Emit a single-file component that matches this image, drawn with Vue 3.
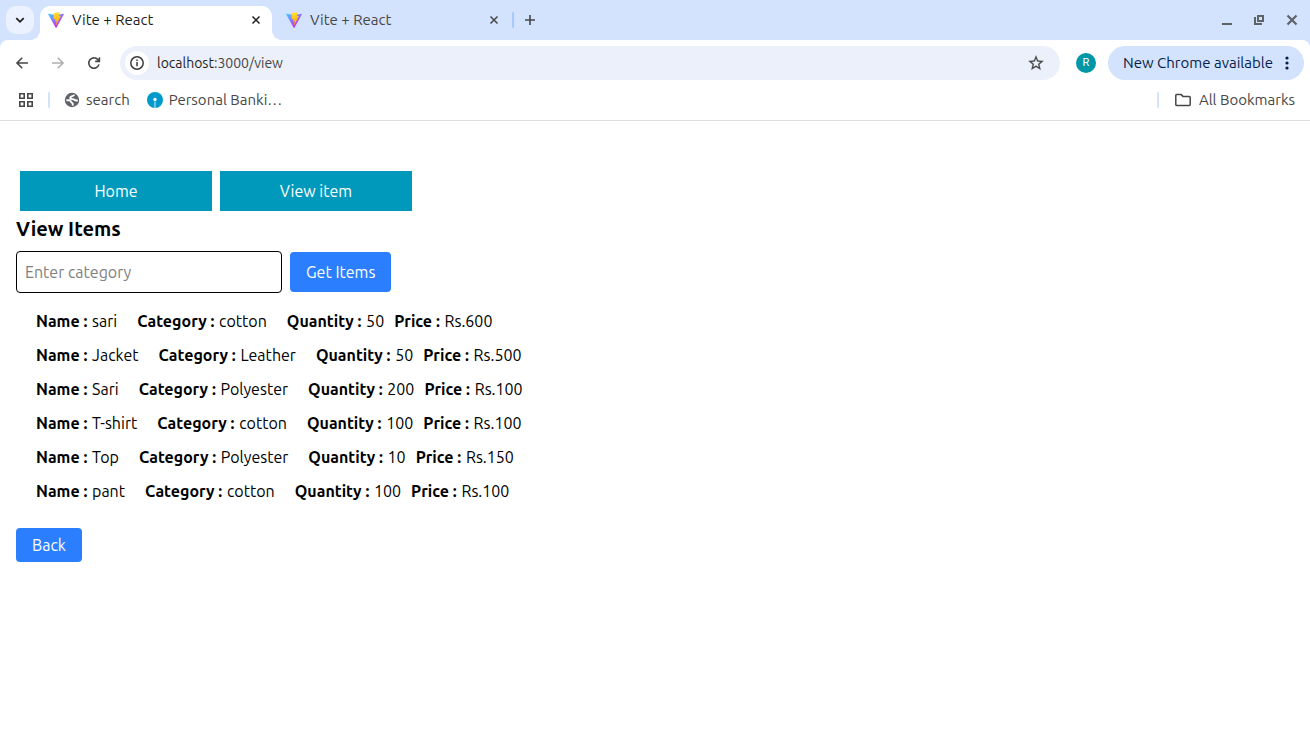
<script setup>
import { ref } from 'vue'

const category = ref('')
const tabs = [
  { title: 'Vite + React', active: true },
  { title: 'Vite + React', active: false },
]
const items = [
  { name: 'sari', category: 'cotton', quantity: 50, price: 600 },
  { name: 'Jacket', category: 'Leather', quantity: 50, price: 500 },
  { name: 'Sari', category: 'Polyester', quantity: 200, price: 100 },
  { name: 'T-shirt', category: 'cotton', quantity: 100, price: 100 },
  { name: 'Top', category: 'Polyester', quantity: 10, price: 150 },
  { name: 'pant', category: 'cotton', quantity: 100, price: 100 },
]
</script>

<template>
  <div class="browser">
    <header class="chrome">
      <div class="tabstrip">
        <button class="tab-search" aria-label="Search tabs">
          <svg width="16" height="16" viewBox="0 0 16 16" fill="none" stroke="#1f1f1f" stroke-width="1.8"><path d="M4.3 6.2 8 9.8l3.7-3.6" /></svg>
        </button>
        <div class="tabs">
          <div v-for="(tab, i) in tabs" :key="i" class="tab" :class="{ active: tab.active }">
            <svg width="16" height="16" viewBox="0 0 256 257" aria-hidden="true">
              <defs>
                <linearGradient :id="'cone' + i" x1="0" x2="0.6" y1="0" y2="0.8"><stop offset="0" stop-color="#41d1ff" /><stop offset="1" stop-color="#bd34fe" /></linearGradient>
                <linearGradient :id="'bolt' + i" x1="0.4" x2="0.5" y1="0" y2="0.9"><stop offset="0" stop-color="#ffea83" /><stop offset="0.1" stop-color="#ffdd35" /><stop offset="1" stop-color="#ffa800" /></linearGradient>
              </defs>
              <path :fill="`url(#cone${i})`" d="M255.153 37.938 134.897 252.976c-2.483 4.44-8.862 4.466-11.382.048L.875 37.958c-2.746-4.814 1.371-10.646 6.827-9.67l120.385 21.517a6.537 6.537 0 0 0 2.322-.004l117.867-21.483c5.438-.991 9.574 4.796 6.877 9.62Z" />
              <path :fill="`url(#bolt${i})`" d="M185.432.063 96.44 17.501a3.268 3.268 0 0 0-2.634 3.014l-5.474 92.456a3.268 3.268 0 0 0 3.997 3.378l24.777-5.718c2.318-.535 4.413 1.507 3.936 3.838l-7.361 36.047c-.495 2.426 1.782 4.5 4.151 3.78l15.304-4.649c2.372-.72 4.652 1.36 4.15 3.788l-11.698 56.621c-.732 3.542 3.979 5.473 5.943 2.437l1.313-2.028 72.516-144.72c1.215-2.423-.88-5.186-3.54-4.672l-25.505 4.922c-2.396.462-4.435-1.77-3.759-4.114l16.646-57.705c.677-2.35-1.37-4.583-3.769-4.113Z" />
            </svg>
            <span class="tab-title">{{ tab.title }}</span>
            <button class="tab-close" aria-label="Close tab">
              <svg width="16" height="16" viewBox="0 0 16 16" fill="none" stroke="currentColor" stroke-width="1.5"><path d="m4.5 4.5 7 7m0-7-7 7" /></svg>
            </button>
          </div>
          <span class="divider strip-divider"></span>
          <button class="new-tab" aria-label="New tab">
            <svg width="16" height="16" viewBox="0 0 16 16" fill="none" stroke="#474747" stroke-width="1.6"><path d="M8 3v10M3 8h10" /></svg>
          </button>
        </div>
        <div class="window-controls">
          <button aria-label="Minimize"><svg width="16" height="16" viewBox="0 0 16 16" stroke="#5f6368" stroke-width="2"><path d="M4 12h10" /></svg></button>
          <button aria-label="Restore"><svg width="16" height="16" viewBox="0 0 16 16" fill="none" stroke="#5f6368" stroke-width="2"><path d="M7 4h5v5H7zM4 5v7h7" /></svg></button>
          <button aria-label="Close window"><svg width="16" height="16" viewBox="0 0 16 16" stroke="#5f6368" stroke-width="2.2"><path d="m3.5 3.5 9 9m0-9-9 9" /></svg></button>
        </div>
      </div>

      <div class="toolbar">
        <div class="nav-buttons">
          <button aria-label="Back"><svg width="16" height="16" viewBox="0 0 16 16" fill="none" stroke="#474747" stroke-width="1.6"><path d="M14 8H3.5M8.2 2.8 3 8l5.2 5.2" /></svg></button>
          <button aria-label="Forward" disabled><svg width="16" height="16" viewBox="0 0 16 16" fill="none" stroke="#b0b0b0" stroke-width="1.6"><path d="M2 8h10.5M7.8 2.8 13 8l-5.2 5.2" /></svg></button>
          <button aria-label="Reload"><svg width="16" height="16" viewBox="0 0 16 16" fill="none" stroke="#474747" stroke-width="1.6"><path d="M13 9.4A5.2 5.2 0 1 1 11.9 4.6L13.2 6M13.4 2.2v4.2H9.2" /></svg></button>
        </div>
        <div class="omnibox">
          <button class="site-info" aria-label="View site information">
            <svg width="16" height="16" viewBox="0 0 16 16" fill="none" stroke="#3c3c3c" stroke-width="1.5"><circle cx="8" cy="8" r="6.2" /><path d="M8 7v4.2M8 4.6v1.5" /></svg>
          </button>
          <a class="url" href="#"><span class="host">localhost</span>:3000/view</a>
          <button class="star" aria-label="Bookmark this tab">
            <svg width="18" height="18" viewBox="0 0 24 24" fill="#474747" stroke="#474747" stroke-width="0.3"><path d="m22 9.24-7.19-.62L12 2 9.19 8.63 2 9.24l5.46 4.73L5.82 21 12 17.27 18.18 21l-1.63-7.03L22 9.24zM12 15.4l-3.76 2.27 1-4.28-3.32-2.88 4.38-.38L12 6.1l1.71 4.04 4.38.38-3.32 2.88 1 4.28L12 15.4z" /></svg>
          </button>
        </div>
        <button class="avatar" aria-label="Profile R">R</button>
        <button class="update">
          New Chrome available
          <svg width="4" height="16" viewBox="0 0 4 16" fill="#041e49"><circle cx="2" cy="3" r="1.6" /><circle cx="2" cy="8" r="1.6" /><circle cx="2" cy="13" r="1.6" /></svg>
        </button>
      </div>

      <nav class="bookmarks" aria-label="Bookmarks">
        <button class="apps" aria-label="Apps">
          <svg width="16" height="16" viewBox="0 0 16 16" fill="none" stroke="#474747" stroke-width="1.6"><path d="M1.8 1.8h4.4v4.4H1.8zM9.8 1.8h4.4v4.4H9.8zM1.8 9.8h4.4v4.4H1.8zM9.8 9.8h4.4v4.4H9.8z" /></svg>
        </button>
        <span class="divider"></span>
        <a class="bookmark search" href="#">
          <svg width="16" height="16" viewBox="0 0 16 16" fill="none"><circle cx="8" cy="8" r="7.2" fill="#5f6368" /><path stroke="#fff" stroke-width="1.9" d="M10.2 2.6C9.8 4.6 6.4 3.6 6.2 5.8c-.1 1.8 2.8 1 4.2 2 1.2.9 2.2.8 3.4.5M2.4 8.2h2.8c2 0 1.4 2.2 2.9 2.6 1.2.3.7 1.6.5 2.9" /></svg>
          search
        </a>
        <a class="bookmark" href="#">
          <svg width="16" height="16" viewBox="0 0 16 16"><circle cx="8" cy="8" r="8" fill="#0099cc" /><circle cx="8" cy="7.5" r="1.7" fill="#fff" /><path fill="#fff" fill-opacity="0.7" d="M7.4 9.4h1.2V16H7.4z" /></svg>
          Personal Banki…
        </a>
        <span class="divider bookmarks-divider"></span>
        <a class="bookmark all" href="#">
          <svg width="16" height="16" viewBox="0 0 16 16" fill="none" stroke="#474747" stroke-width="1.5"><path d="M.8 12.6V3.4q0-.8.8-.8h4.6L8 4.4h6.4q.8 0 .8.8v7.4q0 .8-.8.8H1.6q-.8 0-.8-.8Z" /></svg>
          All Bookmarks
        </a>
      </nav>
    </header>

    <main class="page">
      <nav class="menu" aria-label="Main">
        <a href="#">Home</a>
        <a href="#">View item</a>
      </nav>
      <h2>View Items</h2>
      <form class="filter" @submit.prevent>
        <input v-model="category" type="text" placeholder="Enter category" aria-label="Category" />
        <button class="primary" type="submit">Get Items</button>
      </form>
      <ul class="items">
        <li v-for="item in items" :key="item.name">
          <span class="field wide"><strong>Name :</strong> {{ item.name }}</span>
          <span class="field wide"><strong>Category :</strong> {{ item.category }}</span>
          <span class="field"><strong>Quantity :</strong> {{ item.quantity }}</span>
          <span class="field"><strong>Price :</strong> Rs.{{ item.price }}</span>
        </li>
      </ul>
      <button class="primary back" type="button">Back</button>
    </main>
  </div>
</template>

<style>
body {
  background: #fff;
}
</style>

<style scoped>
.browser {
  min-height: 100vh;
  background: #fff;
  font-family: Ubuntu, "Noto Sans", sans-serif;
  color: #000;
}
button, input {
  font: inherit;
}
button {
  border: 0;
  padding: 0;
  background: none;
  color: inherit;
}
a {
  color: inherit;
  text-decoration: none;
}
svg {
  display: block;
  flex: none;
}
.chrome {
  background: #d3e2fd;
  border-bottom: 1px solid #dedfe1;
  font-size: 15px;
  line-height: 20px;
}
.tabstrip {
  display: flex;
  height: 40px;
}
.tab-search {
  display: grid;
  place-items: center;
  width: 28px;
  height: 28px;
  margin: 6px 6px 0;
  border-radius: 10px;
  background: #ebf1fe;
}
.tabs {
  display: flex;
  flex: 1;
  align-items: flex-start;
  padding-top: 6px;
}
.tab {
  position: relative;
  display: flex;
  align-items: center;
  gap: 8px;
  width: 232px;
  height: 34px;
  padding: 0 8px 6px;
  box-sizing: border-box;
  border-radius: 10px 10px 0 0;
  color: #474747;
}
.tab.active {
  background: #fff;
  color: #1f1f1f;
}
.tab + .tab {
  margin-left: 6px;
}
/* Concave corners where the active tab meets the toolbar */
.tab.active::before,
.tab.active::after {
  content: "";
  position: absolute;
  bottom: 0;
  width: 10px;
  height: 10px;
}
.tab.active::before {
  left: -10px;
  background: radial-gradient(circle at 0 0, transparent 10px, #fff 10px);
}
.tab.active::after {
  right: -10px;
  background: radial-gradient(circle at 100% 0, transparent 10px, #fff 10px);
}
.tab-title {
  flex: 1;
}
.divider {
  width: 2px;
  height: 16px;
  border-radius: 1px;
  background: #d3e2fd;
}
.strip-divider {
  margin: 6px 8px 0 2px;
  background: #a8c7fa;
}
.new-tab {
  margin-top: 6px;
}
.window-controls {
  display: flex;
  gap: 17px;
  padding: 12px 10px 0;
  align-items: flex-start;
}
.toolbar {
  display: flex;
  align-items: center;
  padding: 6px 6px 0 14px;
  border-radius: 8px 8px 0 0;
  background: #fff;
}
.nav-buttons {
  display: flex;
  gap: 20px;
  margin-right: 18px;
}
.omnibox {
  display: flex;
  flex: 1;
  align-items: center;
  height: 34px;
  padding: 0 15px 0 5px;
  border-radius: 17px;
  background: #ecf0fa;
}
.site-info {
  display: grid;
  place-items: center;
  width: 24px;
  height: 24px;
  border-radius: 50%;
  background: #fff;
}
.url {
  flex: 1;
  margin-left: 8px;
  color: #474747;
  font-size: 14px;
}
.host {
  color: #1f1f1f;
}
.avatar {
  width: 20px;
  height: 20px;
  margin: 0 12px 0 16px;
  border-radius: 50%;
  background: #0097a7;
  color: #fff;
  font-family: Roboto, sans-serif;
  font-size: 11px;
  line-height: 20px;
}
.update {
  display: flex;
  align-items: center;
  justify-content: space-between;
  width: 196px;
  height: 34px;
  padding: 0 15px;
  border-radius: 17px;
  background: #d3e2fd;
  color: #041e49;
  white-space: nowrap;
}
.bookmarks {
  display: flex;
  align-items: center;
  height: 40px;
  padding: 0 15px 0 18px;
  background: #fff;
  color: #474747;
}
.apps {
  margin-right: 14px;
}
.bookmark {
  display: flex;
  align-items: center;
  gap: 6px;
}
.search {
  margin: 0 17px 0 14px;
}
.bookmarks-divider {
  margin-left: auto;
}
.all {
  gap: 8px;
  margin-left: 16px;
}
.page {
  padding: 50px 16px 16px;
  font-size: 16px;
  line-height: 24px;
}
.menu {
  display: flex;
  gap: 8px;
  padding-left: 4px;
}
.menu a {
  width: 192px;
  padding: 8px 0;
  background: #0099bb;
  color: #fff;
  text-align: center;
}
h2 {
  margin: 4px 0 8px;
  font-size: 20px;
  font-weight: 700;
  line-height: 28px;
}
.filter {
  display: flex;
  align-items: center;
  gap: 8px;
}
.filter input {
  width: 266px;
  height: 42px;
  box-sizing: border-box;
  padding: 8px;
  border: 1px solid #000;
  border-radius: 4px;
  background: #fff;
}
.filter input::placeholder {
  color: #808080;
  opacity: 1;
}
.primary {
  padding: 8px 16px;
  border-radius: 4px;
  background: #2b7fff;
  color: #fff;
}
.items {
  margin: 11px 0 20px;
  padding: 0 20px;
  list-style: none;
}
.items li {
  display: flex;
  padding: 5px 0;
}
.items strong {
  margin-right: 1px;
}
.field {
  margin-right: 10px;
}
.wide {
  margin-right: 20px;
}
.back {
  padding: 5px 16px;
}
</style>
